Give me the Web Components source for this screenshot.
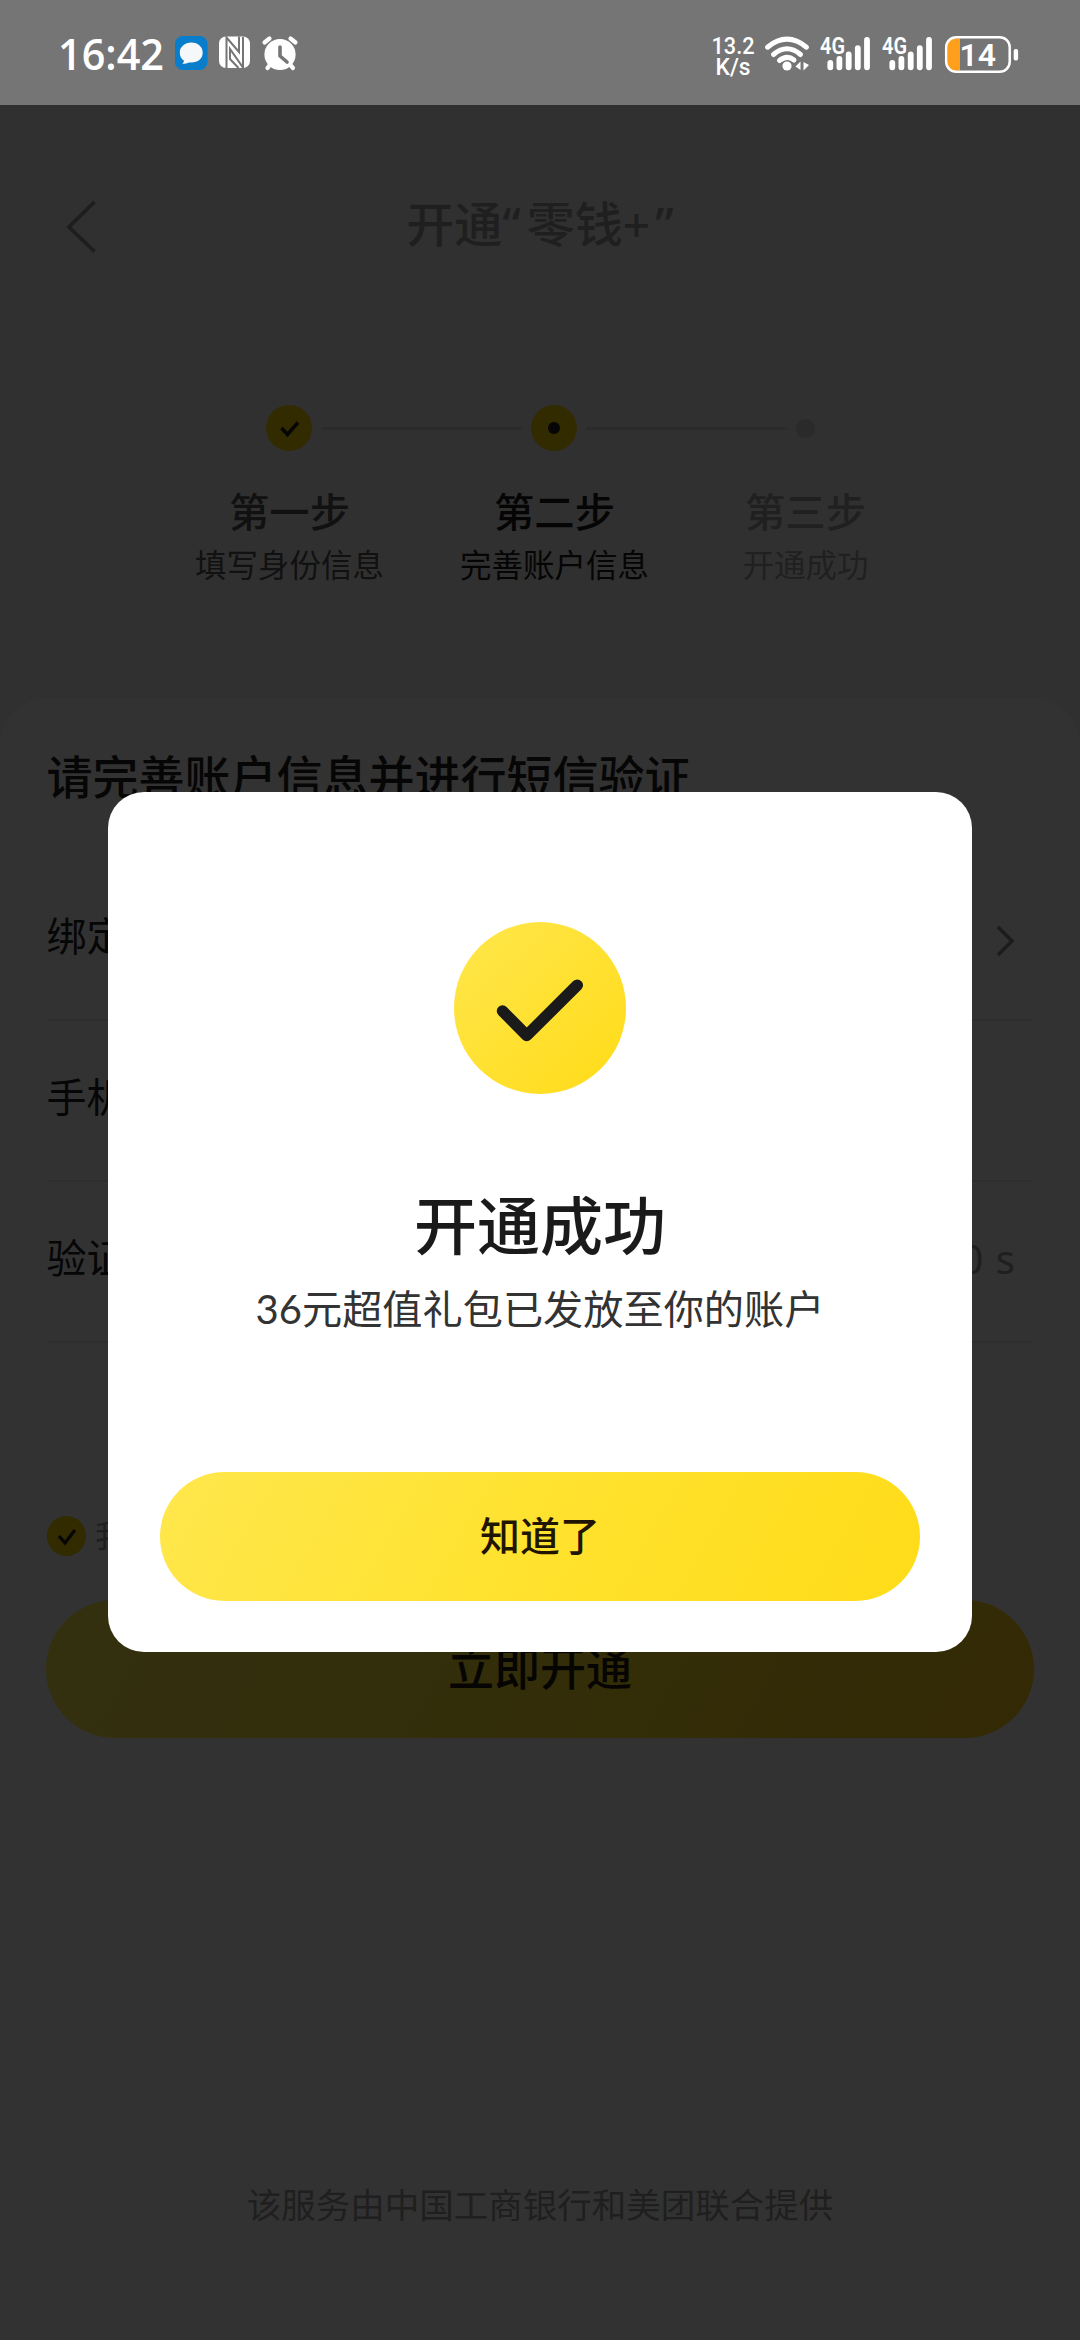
<!DOCTYPE html>
<html lang="zh-CN">
<head>
<meta charset="utf-8">
<title>开通零钱+</title>
<style>
html,body{margin:0;padding:0}
body{width:1080px;height:2340px;overflow:hidden;background:#323232;font-family:"Noto Sans CJK SC",sans-serif}
</style>
</head>
<body>
<wallet-app></wallet-app>
<script>
const define=(name,html)=>{
  const t=document.createElement('template');
  t.innerHTML=html;
  customElements.define(name,class extends HTMLElement{
    constructor(){super();this.attachShadow({mode:'open'}).appendChild(t.content.cloneNode(true));}
  });
};

define('signal-bars',`
<style>:host{display:block;width:51px;height:37px}svg{display:block;overflow:visible}text{font:600 23.500px Roboto,sans-serif;fill:#fff}</style>
<svg width="51" height="37" viewBox="820 35 51 37">
<text x="821" y="53.500" textLength="25" lengthAdjust="spacingAndGlyphs">4G</text>
<g stroke="#fff" stroke-width="5.800" stroke-linecap="round">
<path d="M831.300 62.900V67.300M840.400 59V67.300M849.700 54.300V67.300M858.800 48.200V67.300M868 39.900V67.300"/></g>
</svg>`);

define('status-bar',`
<style>
:host{display:flex;height:105px;background:#757575;color:#fff;box-sizing:border-box;padding:35px 61px 0 58px;align-items:flex-start}
svg{display:block;flex:none;overflow:visible}
.msg{margin-left:9px}.nfc{margin-left:11px}.alarm{margin-left:11px}
.right{margin-left:auto;display:flex}
.wifi{margin-left:10px}.s1{margin-left:9px}.s2{margin-left:11px}.bat{margin-left:12px}
text{fill:#fff}
</style>
<svg width="107" height="38" viewBox="58 35 107 38"><text x="58" y="69.500" textLength="106" lengthAdjust="spacingAndGlyphs" style="font:600 43.500px 'Open Sans',sans-serif">16:42</text></svg>
<svg class="msg" width="34" height="36" viewBox="174.500 35 34 36"><rect x="175.500" y="36" width="32.500" height="34" rx="8" fill="#087dcc"/><path d="M192 42.600c-6.800 0-11.700 4.300-11.700 10.200 0 3.500 1.600 6.200 4.200 8-.2 1.200-.8 2.200-1.600 3.100 2.700 0 4.900-.5 6.700-1.400 8.300.9 13.600-3.600 13.600-9.700 0-5.900-4.500-10.200-11.200-10.200z" fill="#f6f7f8"/></svg>
<svg class="nfc" width="31" height="34" viewBox="219 36 31 34"><rect x="219" y="37.500" width="31" height="31.500" rx="7" fill="#fff"/><path d="M226.500 69V38.500L239 53V37.500M243 38V68.500L230 50V60L238.500 69" stroke="#757575" stroke-width="2" fill="none"/></svg>
<svg class="alarm" width="38" height="37" viewBox="261 35 38 37"><g stroke="#fff" stroke-width="4.200" stroke-linecap="round"><path d="M264.500 42.500L269.500 38.500M295.500 42.500L290.500 38.500M270.500 64L267.500 68M289.500 64L293 68"/></g><circle cx="280" cy="54.500" r="15.600" fill="#fff"/><path d="M280 47V56L287 62" fill="none" stroke="#757575" stroke-width="3.600" stroke-linecap="round" stroke-linejoin="round"/></svg>
<div class="right">
<svg width="44" height="42" viewBox="712 33 44 42"><g style="font:500 23.500px Roboto,sans-serif"><text x="712.500" y="52" textLength="43" lengthAdjust="spacingAndGlyphs">13.2</text><text x="716.500" y="73" textLength="35" lengthAdjust="spacingAndGlyphs">K/s</text></g></svg>
<svg class="wifi" width="45" height="37" viewBox="765 35 45 37"><g fill="none" stroke="#fff" stroke-width="5" stroke-linecap="round"><path d="M767.500 47.200Q787 31.200 806.500 47.200M773.500 54.500Q787 43 800.500 54.500M779.500 60.500Q787 54.500 794 60"/></g><circle cx="787" cy="66" r="4.600" fill="#fff"/><path d="M795.500 66.500L800.500 61.500V70M803.500 62V70.500L809 65" fill="#fff"/></svg>
<signal-bars class="s1"></signal-bars><signal-bars class="s2"></signal-bars>
<svg class="bat" width="75" height="39" viewBox="944 34 75 39"><path d="M960 37.500V69.500H954.500Q947.500 69.500 947.500 62V45Q947.500 37.500 954.500 37.500Z" fill="#ff9f1c"/><rect x="946.200" y="36.200" width="63.500" height="34.600" rx="10" fill="none" stroke="#fff" stroke-width="2.500"/><rect x="1013.700" y="48" width="4.400" height="11.500" rx="2" fill="#fff"/><text x="959.500" y="65" textLength="36.500" lengthAdjust="spacingAndGlyphs" style="font:600 32px Roboto,sans-serif">14</text></svg>
</div>`);

define('nav-bar',`
<style>
:host{display:grid;grid-template-columns:150px 1fr 150px;height:237px;align-items:center;color:#1f1f1f}
svg{display:block;margin:4px 0 0 65px}
.t{text-align:center;font:500 48px/80px "Noto Sans","Noto Sans CJK SC",sans-serif;white-space:nowrap}
</style>
<svg width="34" height="56" viewBox="65 198 34 56"><path d="M94.500 202L69 227L94.500 251.500" fill="none" stroke="#1e1e1e" stroke-width="3.800"/></svg>
<div class="t"><slot></slot></div>`);

define('step-label',`
<style>
:host{display:flex;flex-direction:column;align-items:center;white-space:nowrap;color:#111}
:host([state=now]){color:#050505}:host([state=todo]){color:#202020}
.a{font-size:40.300px;line-height:56px;font-weight:500}
.b{font-size:31.500px;line-height:46px;margin-top:2px}
</style><div class="a"><slot name="title"></slot></div><div class="b"><slot></slot></div>`);

define('step-progress',`
<style>
:host{display:block;height:356px}
.track{display:flex;align-items:center;padding:63px 0 0 266px;height:46px}
.c{width:46px;height:46px;border-radius:50%;background:#332b00;display:flex;align-items:center;justify-content:center}
.c i{width:12px;height:12px;border-radius:50%;background:#060606}
.l{width:202px;height:3px;background:#2b2b2b;margin:0 8px 0 9px}
.d{width:19px;height:19px;border-radius:50%;background:#2a2a2a}
.labels{display:grid;grid-template-columns:265px 265px 237px;padding:31px 0 0 157px}
</style>
<div class="track"><div class="c"><svg width="46" height="46"><path d="M15.500 23L21.500 29.500L32 17.500" fill="none" stroke="#060606" stroke-width="3.600"/></svg></div><div class="l"></div><div class="c"><i></i></div><div class="l"></div><div class="d"></div></div>
<div class="labels">
<step-label><span slot="title">第一步</span>填写身份信息</step-label>
<step-label state="now"><span slot="title">第二步</span>完善账户信息</step-label>
<step-label state="todo"><span slot="title">第三步</span>开通成功</step-label>
</div>`);

define('form-row',`
<style>
:host{display:flex;justify-content:space-between;align-items:center;height:161px;box-sizing:border-box;border-bottom:2px solid #2e2e2e;font-size:40px;line-height:60px;color:#060606;padding:0 17px 11px 0}
span{margin-left:-1.500px}
::slotted([slot=end]){color:#1f1f1f;display:block}
</style><span><slot></slot></span><slot name="end"></slot>`);

define('account-form',`
<style>
:host{display:block;background:#323232;border-radius:46px 46px 0 0;padding:46px 48px 0 48px;height:1596px}
h2{margin:0 0 0 -1.500px;font-size:46px;line-height:60px;font-weight:500;color:#060606;white-space:nowrap}
.rows{margin-top:56px}
.agree{display:flex;align-items:center;height:44px;margin:171px 0 0 -1px;font-size:31px;line-height:44px;color:#1f1f1f}
.agree i{width:39px;height:40px;border-radius:50%;background:#332b00;margin-right:9px}
.agree span{margin-top:-4px}
.go{margin:42px -2px 0 -2px;height:138px;border-radius:69px;background:linear-gradient(120deg,#333010,#332d08 60%,#332905);display:flex;justify-content:center;align-items:center;font-size:46px;line-height:60px;font-weight:500;color:#060502}
.go span{margin-top:-8px}
footer{text-align:center;font-size:34.500px;line-height:50px;color:#1f1f1f;margin-top:440px;white-space:nowrap}
</style>
<h2>请完善账户信息并进行短信验证</h2>
<div class="rows">
<form-row>绑定银行卡<svg slot="end" width="19" height="32" viewBox="0 0 19 32" style="margin-top:13px"><path d="M2 2L16 16L2 30" fill="none" stroke="#1c1c1c" stroke-width="3.500"/></svg></form-row>
<form-row>手机号</form-row>
<form-row>验证码<span slot="end" style="font:40px 'Noto Sans',sans-serif;margin-top:5px;word-spacing:2px">60 s</span></form-row>
</div>
<div class="agree"><i><svg width="39" height="40" style="display:block"><path d="M12 20L18 27L28 14" fill="none" stroke="#060606" stroke-width="3.200"/></svg></i><span>我已阅读并同意</span></div>
<div class="go"><span>立即开通</span></div>
<footer>该服务由中国工商银行和美团联合提供</footer>`);

define('success-dialog',`
<style>
:host{position:absolute;left:108px;top:792px;width:864px;height:860px;box-sizing:border-box;background:#fff;border-radius:36px;display:flex;flex-direction:column;align-items:center;padding-top:129.500px;white-space:nowrap}
svg{display:block}
h1{margin:83px 0 0;font-size:63px;line-height:90px;font-weight:500;color:#1a1a1a}
p{margin:10.500px 0 0;height:60px;font-size:40.200px;line-height:60px;color:#333}
button{margin:135px 0 0;padding:0 0 6px;border:0;width:760px;height:129px;border-radius:65px;background:linear-gradient(120deg,#ffe74d,#ffe22e 50%,#ffdc19);font:500 40px/60px "Noto Sans CJK SC",sans-serif;color:#1f1500}
</style>
<svg width="172" height="172"><defs><linearGradient id="g" x1="0" y1="0" x2="1" y2="1"><stop stop-color="#ffe74d"/><stop offset="1" stop-color="#ffdb17"/></linearGradient></defs><circle cx="86" cy="86" r="86" fill="url(#g)"/><path d="M48.500 89L72.700 113.500L123.300 63.200" fill="none" stroke="#1a1a1a" stroke-width="11.500" stroke-linecap="round" stroke-linejoin="round"/></svg>
<h1><slot name="title"></slot></h1><p><slot></slot></p><button><slot name="action"></slot></button>`);

define('wallet-app',`
<style>:host{display:block;position:relative;width:1080px;height:2340px;background:#303030;overflow:hidden}
.n{font-family:Lato,sans-serif;line-height:1;font-size:40px}
.ql{margin-right:6px}.qr{margin-left:5px}</style>
<status-bar></status-bar>
<nav-bar>开通<span class="ql">“</span>零钱+<span class="qr">”</span></nav-bar>
<step-progress></step-progress>
<account-form></account-form>
<success-dialog><span slot="title">开通成功</span><span class="n">36</span>元超值礼包已发放至你的账户<span slot="action">知道了</span></success-dialog>`);
</script>
</body>
</html>
